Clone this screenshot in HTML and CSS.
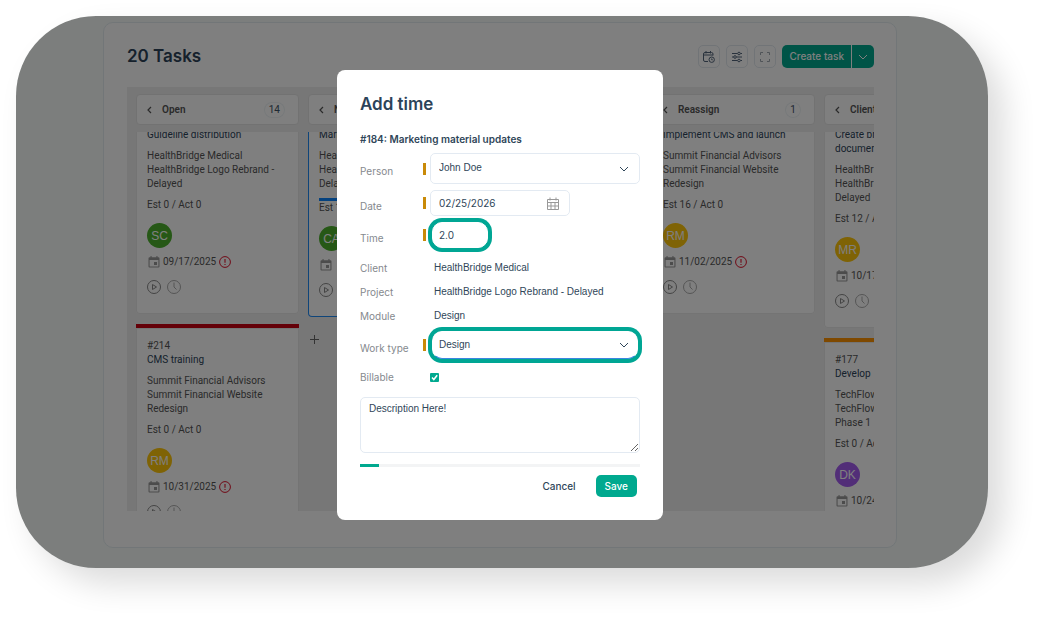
FILE: index.html
```html
<!DOCTYPE html>
<html lang="en">
<head>
<meta charset="utf-8">
<meta name="viewport" content="width=device-width, initial-scale=1">
<title>Tasks</title>
<link rel="stylesheet" href="styles.css">
</head>
<body>
<svg class="sprite" aria-hidden="true">
  <symbol id="i-back" viewBox="0 0 8 8"><path d="M5 1 2 4l3 3" fill="none" stroke="currentColor" stroke-width="1.2"/></symbol>
  <symbol id="i-down" viewBox="0 0 10 10"><path d="m1 3 4 4 4-4" fill="none" stroke="currentColor"/></symbol>
  <symbol id="i-event" viewBox="0 0 12 12"><path d="M2.500 0v1.200h-1Q.5 1.200.5 2.400v8q0 1.100 1 1.100h9q1 0 1-1.100v-8q0-1.200-1-1.200h-1V0H8.400v1.200H3.600V0zM1.600 4h8.800v6.400H1.600zM6 6h3v3H6z" fill="currentColor" fill-rule="evenodd"/></symbol>
  <symbol id="i-alert" viewBox="0 0 12 12"><circle cx="6" cy="6" r="5.400" fill="none" stroke="currentColor"/><path d="M6 3v3.800M6 7.900v1.200" stroke="currentColor" stroke-width="1.100"/></symbol>
  <symbol id="i-play" viewBox="0 0 14 14"><circle cx="7" cy="7" r="6.500" fill="none" stroke="currentColor"/><path d="M5.500 4.500v5L9.500 7z" fill="none" stroke="currentColor"/></symbol>
  <symbol id="i-clock" viewBox="0 0 14 14"><circle cx="7" cy="7" r="6.500" fill="none" stroke="currentColor"/><path d="M7 2.500V7l2.500 2.500" fill="none" stroke="currentColor"/></symbol>
</svg>
<div class="frame">
  <main class="panel">
    <header class="toolbar">
      <h1 class="title">20 Tasks</h1>
      <button class="tool" aria-label="Schedule"><svg width="12" height="12" viewBox="0 0 12 12" fill="none" stroke="currentColor"><path d="M5 10.500H2q-1.500 0-1.500-1.500V3q0-1.500 1.500-1.500h6.500Q10 1.500 10 3v1.500M.5 4H10M3 0v2.500M7.500 0v2.500"/><circle cx="8.700" cy="8.700" r="2.700"/><path d="M8.700 7.500v1.300h1"/></svg></button>
      <button class="tool" aria-label="Filters"><svg width="12" height="12" viewBox="0 0 12 12" fill="none" stroke="currentColor"><path d="M1 2.500h5.500M9.500 2.500H11M1 6h1.500M5.500 6H11M1 9.500h5.500M9.500 9.500H11"/><circle cx="8" cy="2.500" r="1.300"/><circle cx="4" cy="6" r="1.300"/><circle cx="8" cy="9.500" r="1.300"/></svg></button>
      <button class="tool tool-faint" aria-label="Full screen"><svg width="10" height="10" viewBox="0 0 10 10" fill="none" stroke="currentColor"><path d="M.5 3V.5H3M7 .5h2.500V3M9.500 7v2.500H7M3 9.500H.5V7"/></svg></button>
      <div class="split">
        <button class="create">Create task</button>
        <button class="create-more" aria-label="More options"><svg width="10" height="10"><use href="#i-down"/></svg></button>
      </div>
    </header>
    <div class="board">
      <section class="column">
        <header class="column-head"><svg width="8" height="8"><use href="#i-back"/></svg><h2>Open</h2><span class="count">14</span></header>
        <div class="cards"><div class="stack">
          <article class="card card-cut">
            <p class="name">Guideline distribution</p>
            <p>HealthBridge Medical<br>HealthBridge Logo Rebrand -<br>Delayed</p>
            <p>Est 0 / Act 0</p>
            <span class="avatar green">SC</span>
            <div class="due"><svg width="12" height="12"><use href="#i-event"/></svg>09/17/2025<svg class="alert" width="12" height="12"><use href="#i-alert"/></svg></div>
            <div class="actions"><svg width="14" height="14"><use href="#i-play"/></svg><svg class="faint" width="14" height="14"><use href="#i-clock"/></svg></div>
          </article>
          <article class="card bar-red">
            <p class="name"><span class="num">#214</span><br>CMS training</p>
            <p>Summit Financial Advisors<br>Summit Financial Website<br>Redesign</p>
            <p>Est 0 / Act 0</p>
            <span class="avatar yellow">RM</span>
            <div class="due"><svg width="12" height="12"><use href="#i-event"/></svg>10/31/2025<svg class="alert" width="12" height="12"><use href="#i-alert"/></svg></div>
            <div class="actions"><svg width="14" height="14"><use href="#i-play"/></svg><svg class="faint" width="14" height="14"><use href="#i-clock"/></svg></div>
          </article>
        </div></div>
      </section>
      <section class="column">
        <header class="column-head"><svg width="8" height="8"><use href="#i-back"/></svg><h2>New</h2></header>
        <div class="cards"><div class="stack">
          <article class="card card-cut card-active">
            <p class="name">Marketing</p>
            <p>Health<br>Health<br>Delayed</p>
            <p class="tracked">Est 1</p>
            <span class="avatar green">CA</span>
            <div class="due"><svg width="12" height="12"><use href="#i-event"/></svg></div>
            <div class="actions"><svg width="14" height="14"><use href="#i-play"/></svg></div>
          </article>
          <button class="add" aria-label="Add a task"><svg width="9" height="9" viewBox="0 0 9 9"><path d="M4.500 0v9M0 4.500h9" stroke="currentColor"/></svg></button>
        </div></div>
      </section>
      <section class="column"><header class="column-head"></header></section>
      <section class="column">
        <header class="column-head"><svg width="8" height="8"><use href="#i-back"/></svg><h2>Reassign</h2><span class="count">1</span></header>
        <div class="cards"><div class="stack">
          <article class="card card-cut">
            <p class="name">Implement CMS and launch</p>
            <p>Summit Financial Advisors<br>Summit Financial Website<br>Redesign</p>
            <p>Est 16 / Act 0</p>
            <span class="avatar yellow">RM</span>
            <div class="due"><svg width="12" height="12"><use href="#i-event"/></svg>11/02/2025<svg class="alert" width="12" height="12"><use href="#i-alert"/></svg></div>
            <div class="actions"><svg width="14" height="14"><use href="#i-play"/></svg><svg class="faint" width="14" height="14"><use href="#i-clock"/></svg></div>
          </article>
        </div></div>
      </section>
      <section class="column">
        <header class="column-head"><svg width="8" height="8"><use href="#i-back"/></svg><h2>Client</h2></header>
        <div class="cards"><div class="stack">
          <article class="card card-cut">
            <p class="name">Create brand<br>documents</p>
            <p>HealthBridge<br>HealthBridge<br>Delayed</p>
            <p>Est 12 / Act 0</p>
            <span class="avatar yellow">MR</span>
            <div class="due"><svg width="12" height="12"><use href="#i-event"/></svg>10/17</div>
            <div class="actions"><svg width="14" height="14"><use href="#i-play"/></svg><svg class="faint" width="14" height="14"><use href="#i-clock"/></svg></div>
          </article>
          <article class="card bar-orange">
            <p class="name"><span class="num">#177</span><br>Develop</p>
            <p>TechFlow<br>TechFlow<br>Phase 1</p>
            <p>Est 0 / Act 0</p>
            <span class="avatar purple">DK</span>
            <div class="due"><svg width="12" height="12"><use href="#i-event"/></svg>10/24</div>
          </article>
        </div></div>
      </section>
    </div>
  </main>
  <div class="overlay">
    <form class="dialog" role="dialog" aria-labelledby="dialog-title">
      <h2 class="dialog-title" id="dialog-title">Add time</h2>
      <p class="task">#184: Marketing material updates</p>
      <div class="fields">
        <div class="row required"><label for="person">Person</label>
          <div class="control"><select class="box tall" id="person"><option>John Doe</option></select><svg width="10" height="10"><use href="#i-down"/></svg></div></div>
        <div class="row required"><label for="date">Date</label>
          <div class="control date"><input class="box" id="date" type="text" value="02/25/2026"><svg class="grey" width="12" height="13" viewBox="0 0 12 13" fill="none" stroke="currentColor"><path d="M.5 2.500h11v10H.5zM.5 5.500h11M.5 9h11M4 5.500v7M8 5.500v7M3 .5v3M9 .5v3"/></svg></div></div>
        <div class="row required"><label for="time">Time</label>
          <div class="control"><input class="box marked short" id="time" type="text" value="2.0"></div></div>
        <div class="row fixed first"><span class="label">Client</span><span class="value">HealthBridge Medical</span></div>
        <div class="row fixed"><span class="label">Project</span><span class="value">HealthBridge Logo Rebrand - Delayed</span></div>
        <div class="row fixed"><span class="label">Module</span><span class="value">Design</span></div>
        <div class="row required"><label for="type">Work type</label>
          <div class="control"><select class="box marked wide" id="type"><option>Design</option></select><svg width="10" height="10"><use href="#i-down"/></svg></div></div>
        <div class="row fixed billable"><label for="billable">Billable</label>
          <div class="tick"><input class="check" id="billable" type="checkbox" checked><svg width="9" height="9" viewBox="0 0 9 9"><path d="m2 4.600 1.800 1.900L7.200 2.200" fill="none" stroke="#fff" stroke-width="1.500"/></svg></div></div>
      </div>
      <textarea class="notes" aria-label="Description">Description Here!</textarea>
      <div class="progress"><div class="progress-fill"></div></div>
      <div class="buttons"><button type="button" class="cancel">Cancel</button><button type="button" class="save">Save</button></div>
    </form>
  </div>
</div>
</body>
</html>
```
FILE: styles.css
```css
* { box-sizing: border-box; }
body { margin: 0; background: #fff; font: 10px/14px Inter, sans-serif; color: #2f4659; }
h1, h2, p { margin: 0; }
button, input, select, textarea { font: inherit; color: inherit; margin: 0; }
button { border: 0; padding: 0; background: none; cursor: pointer; }
svg { flex: none; display: block; }
.sprite { position: absolute; width: 0; height: 0; }

.frame {
  position: relative;
  height: calc(100vh - 65px);
  min-height: 520px;
  margin: 16px 49px 49px 16px;
  padding: 6px 91px 20px 87px;
  display: flex;
  background: #f8fcfa;
  border-radius: 80px;
  overflow: hidden;
  box-shadow: 16px 16px 32px rgba(0, 0, 0, .14);
}
.panel {
  flex: 1;
  min-width: 0;
  display: flex;
  flex-direction: column;
  gap: 19px;
  padding: 22px 22px 36px 23px;
  background: #fff;
  border: 1px solid #e4edf0;
  border-radius: 10px;
}
.toolbar { display: flex; align-items: center; gap: 6px; }
.title { flex: 1; font-size: 17px; line-height: 23px; font-weight: 600; color: #2c4359; }
.tool { width: 22px; height: 23px; display: grid; place-items: center; border: 1px solid #e2e8ee; border-radius: 5px; color: #53657a; }
.tool-faint { color: #a0a8b0; }
.split { display: flex; height: 23px; border-radius: 5px; overflow: hidden; background: #00a98f; color: #fff; }
.create { padding: 0 7px 1px; font-weight: 500; }
.create-more { width: 23px; display: grid; place-items: center; border-left: 1px solid #fff; }

.board {
  flex: 1;
  min-height: 0;
  display: flex;
  gap: 9px;
  padding: 7px 0 0 9px;
  background: #eee;
  overflow: hidden;
  font-family: Roboto, sans-serif;
  color: #555;
}
.column { flex: none; width: 163px; display: flex; flex-direction: column; gap: 7px; min-height: 0; }
.column-head { display: flex; align-items: center; height: 31px; padding: 0 14px 0 9px; background: #fff; border: 1px solid #e4e4e4; border-radius: 4px; }
.column-head h2 { flex: 1; padding-left: 8px; font-size: 10px; line-height: 14px; font-weight: 600; }
.count { min-width: 14px; height: 14px; padding: 0 4px; text-align: center; border-radius: 7px; box-shadow: 0 0 0 1px #eef3f5; color: #3c5064; }
.cards { flex: 1; min-height: 0; overflow: hidden; }
.stack { display: flex; flex-direction: column; gap: 10px; }
.card { display: flex; flex-direction: column; gap: 7px; padding: 11px 11px 20px; background: #fff; border-radius: 4px; box-shadow: inset 0 0 0 1px #e8e8e8; white-space: nowrap; }
.card-cut { margin-top: -4px; padding-top: 0; }
.card-active { box-shadow: inset 0 0 0 1px #1f8bf5; }
.bar-red { border-top: 4px solid #c80010; border-radius: 0; }
.bar-orange { border-top: 4px solid #ff9200; border-radius: 0; }
.name { color: #2c4359; }
.num { color: #555; }
.tracked { border-top: 3px solid #0a84ff; }
.avatar { width: 25px; height: 25px; margin-top: 4px; border-radius: 50%; display: grid; place-items: center; font: 12px/14px "Liberation Sans", sans-serif; color: #fff; }
.green { background: #4cb02c; }
.yellow { background: #ffc60a; }
.purple { background: #a45cf0; }
.due { display: flex; align-items: center; gap: 3px; height: 14px; padding-left: 1px; }
.due svg { color: #999; }
.due .alert { color: #e0102a; }
.actions { display: flex; gap: 6px; height: 14px; margin-top: 4px; color: #888; }
.faint { color: #aaa; }
.add { width: 9px; height: 9px; margin: 8px 2px; color: #666; }

.overlay { position: absolute; inset: 0; padding: 6px 4px 0 0; display: flex; align-items: center; justify-content: center; background: rgba(0, 0, 0, .5); }
.dialog { width: 326px; padding: 23px; background: #fff; border-radius: 8px; }
.dialog-title { font-size: 17px; line-height: 22px; font-weight: 600; color: #2c4359; }
.task { margin: 17px 0 7px; font-weight: 600; }
.fields { display: flex; flex-direction: column; gap: 6px; }
.row { display: grid; grid-template-columns: 59px 3px 1fr; column-gap: 4px; align-items: center; }
.required::before { content: ""; grid-column: 2; grid-row: 1; height: 12px; background: #c98a08; }
.row > label, .row > .label { grid-column: 1; grid-row: 1; color: #85898e; white-space: nowrap; }
.row.required > label { padding-top: 5px; }
.control { grid-column: 3; grid-row: 1; display: grid; align-items: center; }
.control > * { grid-area: 1 / 1; }
.control > svg { justify-self: end; margin-right: 11px; pointer-events: none; }
.control > .grey { color: #999; }
.box { width: 100%; height: 26px; padding: 0 8px 1px; appearance: none; border: 1px solid #e3eaf2; border-radius: 5px; background: #fff; outline: 0; }
.tall { height: 31px; }
.date { width: 140px; }
.marked { border-color: #fff; border-radius: 10px; margin-left: 2px; padding: 0 6px 1px; box-shadow: 0 0 0 4px #00a694; }
.short { width: 56px; }
.wide { width: auto; height: 28px; margin-right: 2px; border-bottom: 1px solid #3a86e0; }
.value, select, .notes { font-family: "Liberation Sans", sans-serif; }
.fixed { height: 18px; }
.first { margin-top: 5px; }
.value { grid-column: 3; padding-left: 4px; white-space: nowrap; }
.billable { margin-top: 3px; }
.tick { grid-column: 3; display: grid; justify-content: start; }
.tick > * { grid-area: 1 / 1; pointer-events: none; }
.tick > .check { width: 9px; height: 9px; appearance: none; border-radius: 1px; background: #00a98f; pointer-events: auto; }
.notes { display: block; width: 100%; height: 56px; margin-top: 11px; padding: 4px 8px; border: 1px solid #e3eaf2; border-radius: 5px; resize: vertical; outline: 0; }
.progress { height: 3px; margin: 11px 0 8px; background: #f3f4f5; }
.progress-fill { width: 19px; height: 3px; background: #00a98f; }
.buttons { display: flex; justify-content: flex-end; gap: 20px; padding-right: 3px; }
.buttons button { height: 22px; font-weight: 500; }
.save { padding: 0 9px; border-radius: 5px; background: #00a98f; color: #fff; }
```
